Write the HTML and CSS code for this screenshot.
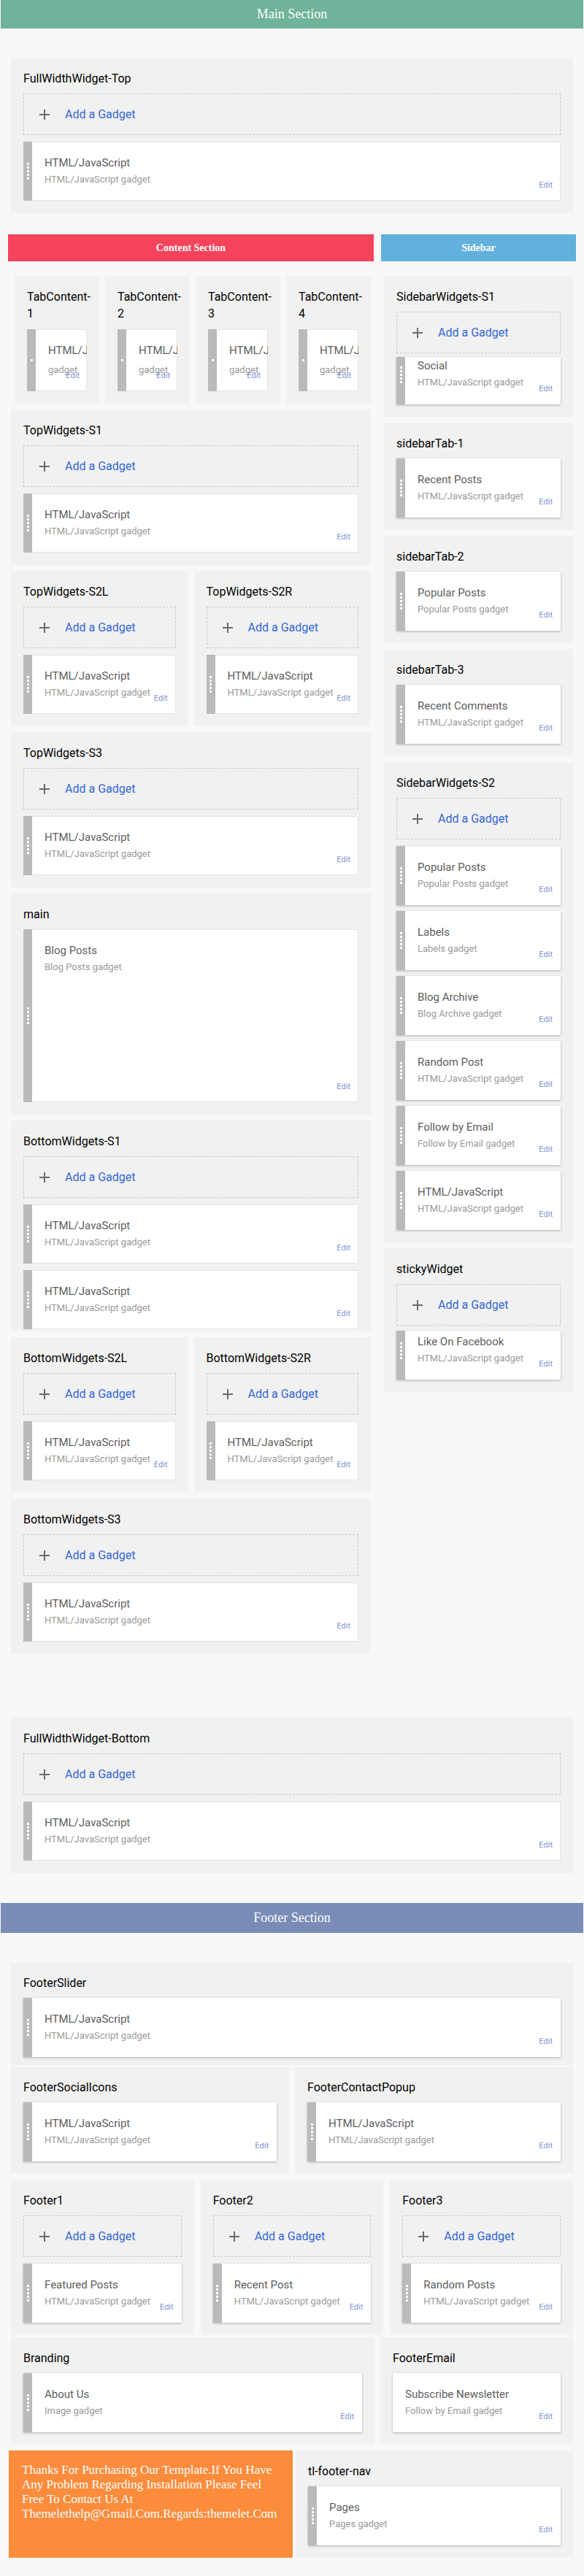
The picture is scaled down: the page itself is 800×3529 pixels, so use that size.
FILE: index.html
```html
<!DOCTYPE html>
<html lang="en">
<head>
<meta charset="utf-8">
<title>Layout</title>
<link rel="stylesheet" href="styles.css">
</head>
<body>
<div class="bar bar-main">Main Section</div>

<div class="panel wide fww-top">
  <h3 class="ptitle">FullWidthWidget-Top</h3>
  <div class="add"><span class="plus"></span>Add a Gadget</div>
  <div class="card"><div class="handle"><i class="dots"></i></div><div class="body"><div class="wt">HTML/JavaScript</div><div class="wd">HTML/JavaScript gadget</div></div><span class="edit">Edit</span></div>
</div>

<div class="cols">
  <div class="col">
    <div class="bar bar-content">Content Section</div>
    <div class="tabs">
      <div class="panel tabp"><h3 class="ptitle">TabContent-1</h3><div class="card tab"><div class="handle"><i class="dot1"></i></div><div class="body"><div class="wt">HTML/JavaScript</div><div class="wd">gadget</div></div><span class="edit">Edit</span></div></div>
      <div class="panel tabp"><h3 class="ptitle">TabContent-2</h3><div class="card tab"><div class="handle"><i class="dot1"></i></div><div class="body"><div class="wt">HTML/JavaScript</div><div class="wd">gadget</div></div><span class="edit">Edit</span></div></div>
      <div class="panel tabp"><h3 class="ptitle">TabContent-3</h3><div class="card tab"><div class="handle"><i class="dot1"></i></div><div class="body"><div class="wt">HTML/JavaScript</div><div class="wd">gadget</div></div><span class="edit">Edit</span></div></div>
      <div class="panel tabp"><h3 class="ptitle">TabContent-4</h3><div class="card tab"><div class="handle"><i class="dot1"></i></div><div class="body"><div class="wt">HTML/JavaScript</div><div class="wd">gadget</div></div><span class="edit">Edit</span></div></div>
    </div>

    <div class="panel">
      <h3 class="ptitle">TopWidgets-S1</h3>
      <div class="add"><span class="plus"></span>Add a Gadget</div>
      <div class="card"><div class="handle"><i class="dots"></i></div><div class="body"><div class="wt">HTML/JavaScript</div><div class="wd">HTML/JavaScript gadget</div></div><span class="edit">Edit</span></div>
    </div>

    <div class="split">
      <div class="panel">
        <h3 class="ptitle">TopWidgets-S2L</h3>
        <div class="add"><span class="plus"></span>Add a Gadget</div>
        <div class="card"><div class="handle"><i class="dots"></i></div><div class="body"><div class="wt">HTML/JavaScript</div><div class="wd">HTML/JavaScript gadget</div></div><span class="edit">Edit</span></div>
      </div>
      <div class="panel">
        <h3 class="ptitle">TopWidgets-S2R</h3>
        <div class="add"><span class="plus"></span>Add a Gadget</div>
        <div class="card"><div class="handle"><i class="dots"></i></div><div class="body"><div class="wt">HTML/JavaScript</div><div class="wd">HTML/JavaScript gadget</div></div><span class="edit">Edit</span></div>
      </div>
    </div>

    <div class="panel">
      <h3 class="ptitle">TopWidgets-S3</h3>
      <div class="add"><span class="plus"></span>Add a Gadget</div>
      <div class="card"><div class="handle"><i class="dots"></i></div><div class="body"><div class="wt">HTML/JavaScript</div><div class="wd">HTML/JavaScript gadget</div></div><span class="edit">Edit</span></div>
    </div>

    <div class="panel">
      <h3 class="ptitle">main</h3>
      <div class="card tall"><div class="handle"><i class="dots"></i></div><div class="body"><div class="wt">Blog Posts</div><div class="wd">Blog Posts gadget</div></div><span class="edit">Edit</span></div>
    </div>

    <div class="panel pb3">
      <h3 class="ptitle">BottomWidgets-S1</h3>
      <div class="add"><span class="plus"></span>Add a Gadget</div>
      <div class="card"><div class="handle"><i class="dots"></i></div><div class="body"><div class="wt">HTML/JavaScript</div><div class="wd">HTML/JavaScript gadget</div></div><span class="edit">Edit</span></div>
      <div class="card"><div class="handle"><i class="dots"></i></div><div class="body"><div class="wt">HTML/JavaScript</div><div class="wd">HTML/JavaScript gadget</div></div><span class="edit">Edit</span></div>
    </div>

    <div class="split">
      <div class="panel">
        <h3 class="ptitle">BottomWidgets-S2L</h3>
        <div class="add"><span class="plus"></span>Add a Gadget</div>
        <div class="card"><div class="handle"><i class="dots"></i></div><div class="body"><div class="wt">HTML/JavaScript</div><div class="wd">HTML/JavaScript gadget</div></div><span class="edit">Edit</span></div>
      </div>
      <div class="panel">
        <h3 class="ptitle">BottomWidgets-S2R</h3>
        <div class="add"><span class="plus"></span>Add a Gadget</div>
        <div class="card"><div class="handle"><i class="dots"></i></div><div class="body"><div class="wt">HTML/JavaScript</div><div class="wd">HTML/JavaScript gadget</div></div><span class="edit">Edit</span></div>
      </div>
    </div>

    <div class="panel">
      <h3 class="ptitle">BottomWidgets-S3</h3>
      <div class="add"><span class="plus"></span>Add a Gadget</div>
      <div class="card"><div class="handle"><i class="dots"></i></div><div class="body"><div class="wt">HTML/JavaScript</div><div class="wd">HTML/JavaScript gadget</div></div><span class="edit">Edit</span></div>
    </div>
  </div>

  <div class="col side">
    <div class="bar bar-sidebar">Sidebar</div>

    <div class="panel">
      <h3 class="ptitle">SidebarWidgets-S1</h3>
      <div class="add m5"><span class="plus"></span>Add a Gadget</div>
      <div class="card sh cut"><div class="handle"><i class="dots"></i></div><div class="body"><div class="wt">Social</div><div class="wd">HTML/JavaScript gadget</div></div><span class="edit">Edit</span></div>
    </div>

    <div class="panel">
      <h3 class="ptitle">sidebarTab-1</h3>
      <div class="card sh"><div class="handle"><i class="dots"></i></div><div class="body"><div class="wt">Recent Posts</div><div class="wd">HTML/JavaScript gadget</div></div><span class="edit">Edit</span></div>
    </div>

    <div class="panel">
      <h3 class="ptitle">sidebarTab-2</h3>
      <div class="card sh"><div class="handle"><i class="dots"></i></div><div class="body"><div class="wt">Popular Posts</div><div class="wd">Popular Posts gadget</div></div><span class="edit">Edit</span></div>
    </div>

    <div class="panel">
      <h3 class="ptitle">sidebarTab-3</h3>
      <div class="card sh"><div class="handle"><i class="dots"></i></div><div class="body"><div class="wt">Recent Comments</div><div class="wd">HTML/JavaScript gadget</div></div><span class="edit">Edit</span></div>
    </div>

    <div class="panel stack8">
      <h3 class="ptitle">SidebarWidgets-S2</h3>
      <div class="add"><span class="plus"></span>Add a Gadget</div>
      <div class="card sh"><div class="handle"><i class="dots"></i></div><div class="body"><div class="wt">Popular Posts</div><div class="wd">Popular Posts gadget</div></div><span class="edit">Edit</span></div>
      <div class="card sh"><div class="handle"><i class="dots"></i></div><div class="body"><div class="wt">Labels</div><div class="wd">Labels gadget</div></div><span class="edit">Edit</span></div>
      <div class="card sh"><div class="handle"><i class="dots"></i></div><div class="body"><div class="wt">Blog Archive</div><div class="wd">Blog Archive gadget</div></div><span class="edit">Edit</span></div>
      <div class="card sh"><div class="handle"><i class="dots"></i></div><div class="body"><div class="wt">Random Post</div><div class="wd">HTML/JavaScript gadget</div></div><span class="edit">Edit</span></div>
      <div class="card sh"><div class="handle"><i class="dots"></i></div><div class="body"><div class="wt">Follow by Email</div><div class="wd">Follow by Email gadget</div></div><span class="edit">Edit</span></div>
      <div class="card sh"><div class="handle"><i class="dots"></i></div><div class="body"><div class="wt">HTML/JavaScript</div><div class="wd">HTML/JavaScript gadget</div></div><span class="edit">Edit</span></div>
    </div>

    <div class="panel">
      <h3 class="ptitle">stickyWidget</h3>
      <div class="add m7"><span class="plus"></span>Add a Gadget</div>
      <div class="card sh cut2"><div class="handle"><i class="dots"></i></div><div class="body"><div class="wt">Like On Facebook</div><div class="wd">HTML/JavaScript gadget</div></div><span class="edit">Edit</span></div>
    </div>
  </div>
</div>

<div class="panel wide fww-bottom">
  <h3 class="ptitle">FullWidthWidget-Bottom</h3>
  <div class="add"><span class="plus"></span>Add a Gadget</div>
  <div class="card"><div class="handle"><i class="dots"></i></div><div class="body"><div class="wt">HTML/JavaScript</div><div class="wd">HTML/JavaScript gadget</div></div><span class="edit">Edit</span></div>
</div>

<div class="bar bar-footer">Footer Section</div>

<div class="footer">
  <div class="panel pb11">
    <h3 class="ptitle">FooterSlider</h3>
    <div class="card sh"><div class="handle"><i class="dots"></i></div><div class="body"><div class="wt">HTML/JavaScript</div><div class="wd">HTML/JavaScript gadget</div></div><span class="edit">Edit</span></div>
  </div>

  <div class="frow two">
    <div class="panel">
      <h3 class="ptitle">FooterSocialIcons</h3>
      <div class="card sh"><div class="handle"><i class="dots"></i></div><div class="body"><div class="wt">HTML/JavaScript</div><div class="wd">HTML/JavaScript gadget</div></div><span class="edit">Edit</span></div>
    </div>
    <div class="panel">
      <h3 class="ptitle">FooterContactPopup</h3>
      <div class="card sh"><div class="handle"><i class="dots"></i></div><div class="body"><div class="wt">HTML/JavaScript</div><div class="wd">HTML/JavaScript gadget</div></div><span class="edit">Edit</span></div>
    </div>
  </div>

  <div class="frow three">
    <div class="panel">
      <h3 class="ptitle">Footer1</h3>
      <div class="add"><span class="plus"></span>Add a Gadget</div>
      <div class="card sh"><div class="handle"><i class="dots"></i></div><div class="body"><div class="wt">Featured Posts</div><div class="wd">HTML/JavaScript gadget</div></div><span class="edit">Edit</span></div>
    </div>
    <div class="panel">
      <h3 class="ptitle">Footer2</h3>
      <div class="add"><span class="plus"></span>Add a Gadget</div>
      <div class="card sh"><div class="handle"><i class="dots"></i></div><div class="body"><div class="wt">Recent Post</div><div class="wd">HTML/JavaScript gadget</div></div><span class="edit">Edit</span></div>
    </div>
    <div class="panel">
      <h3 class="ptitle">Footer3</h3>
      <div class="add"><span class="plus"></span>Add a Gadget</div>
      <div class="card sh"><div class="handle"><i class="dots"></i></div><div class="body"><div class="wt">Random Posts</div><div class="wd">HTML/JavaScript gadget</div></div><span class="edit">Edit</span></div>
    </div>
  </div>

  <div class="frow brand">
    <div class="panel">
      <h3 class="ptitle">Branding</h3>
      <div class="card sh"><div class="handle"><i class="dots"></i></div><div class="body"><div class="wt">About Us</div><div class="wd">Image gadget</div></div><span class="edit">Edit</span></div>
    </div>
    <div class="panel">
      <h3 class="ptitle">FooterEmail</h3>
      <div class="card sh"><div class="body"><div class="wt">Subscribe Newsletter</div><div class="wd">Follow by Email gadget</div></div><span class="edit">Edit</span></div>
    </div>
  </div>

  <div class="frow last">
    <div class="note">Thanks For Purchasing Our Template.If You Have Any Problem Regarding Installation Please Feel Free To Contact Us At Themelethelp@Gmail.Com.Regards:themelet.Com</div>
    <div class="panel">
      <h3 class="ptitle">tl-footer-nav</h3>
      <div class="card sh"><div class="handle"><i class="dots"></i></div><div class="body"><div class="wt">Pages</div><div class="wd">Pages gadget</div></div><span class="edit">Edit</span></div>
    </div>
  </div>
</div>
</body>
</html>
```

FILE: styles.css
```css
* { box-sizing: border-box; }
html, body { margin: 0; padding: 0; }
body {
  background: #f8f8f8;
  font-family: Roboto, "Liberation Sans", Arial, sans-serif;
  color: #000;
  min-height: 3529px;
}

/* section bars */
.bar {
  display: flex;
  align-items: center;
  justify-content: center;
  color: #fff;
  font-family: "Liberation Serif", "Times New Roman", serif;
}
.bar-main { height: 39px; margin: 0 1px 40px; background: #6fb39b; font-size: 18px; }
.bar-footer { height: 41px; margin: 0 1px 40px; background: #798cb7; font-size: 18px; }
.bar-content { height: 37px; background: #f4435a; font-size: 14px; font-weight: 700; margin-bottom: 20px; }
.bar-sidebar { height: 37px; background: #62b1dc; font-size: 14px; font-weight: 700; margin-bottom: 20px; }

/* panels */
.panel { background: #f1f1f1; padding: 17px; }
.wide { margin-left: 15px; margin-right: 15px; }
.fww-top { margin-bottom: 29px; }
.fww-bottom { margin-top: 79px; margin-bottom: 41px; }
.pb3 { padding-bottom: 3px; }
.pb11 { padding-bottom: 11px; }

.ptitle {
  margin: 0 0 8px;
  font-size: 16px;
  font-weight: 400;
  line-height: 24px;
  color: #000;
}

/* columns */
.cols {
  display: grid;
  grid-template-columns: 501px 267px;
  column-gap: 10px;
  margin: 0 11px;
  align-items: start;
}
.col { display: flex; flex-direction: column; }
.col > .panel { margin: 0 4px 8px; }
.tabs {
  display: grid;
  grid-template-columns: repeat(4, 116px);
  gap: 8px;
  margin: 0 4px 8px 9px;
}
.tabp .ptitle { line-height: 23px; margin-bottom: 10px; }
.split {
  display: grid;
  grid-template-columns: 1fr 1fr;
  gap: 8px;
  margin: 0 4px 8px;
}

/* add gadget box */
.add {
  height: 57px;
  border: 1px dashed #c9c9c9;
  display: flex;
  align-items: center;
  padding-left: 21px;
  margin-bottom: 9px;
  font-size: 16px;
  color: #3367d6;
}
.add.m5 { margin-bottom: 5px; }
.add.m7 { margin-bottom: 7px; }
.plus {
  position: relative;
  flex: none;
  width: 14px;
  height: 14px;
  margin-right: 21px;
}
.plus::before, .plus::after {
  content: "";
  position: absolute;
  background: #6b6b6b;
}
.plus::before { left: 6px; top: 0; width: 2px; height: 14px; }
.plus::after { top: 6px; left: 0; width: 14px; height: 2px; }

/* widget cards */
.card {
  position: relative;
  display: flex;
  min-height: 81px;
  background: #fff;
  box-shadow: inset 0 0 0 1px #e4e4e4;
}
.card + .card { margin-top: 9px; }
.stack8 .card + .card { margin-top: 8px; }
.card.sh { box-shadow: 0 1px 3px rgba(0, 0, 0, 0.28); }
.card.tall { min-height: 237px; }
.card.tab { min-height: 85px; }
.card.cut { min-height: 65px; }
.card.cut2 { min-height: 67px; }

.handle {
  flex: none;
  width: 12px;
  background: #bababa;
  display: flex;
  align-items: center;
  justify-content: center;
}
.cut .handle { align-items: flex-start; padding-top: 13px; }
.cut2 .handle { align-items: flex-start; padding-top: 16px; }
.dots {
  display: block;
  width: 3px;
  height: 23px;
  background: repeating-linear-gradient(to bottom, #fff 0 3px, transparent 3px 5px);
}
.dot1 { display: block; width: 3px; height: 3px; background: #fff; }

.body {
  flex: 1;
  min-width: 0;
  overflow: hidden;
  padding: 19px 0 20px 17px;
}
.cut .body { padding-top: 2px; padding-bottom: 0; }
.cut2 .body { padding-top: 5px; padding-bottom: 0; }
.wt {
  font-size: 15px;
  line-height: 20px;
  color: #5e5e5e;
  white-space: nowrap;
}
.wd {
  margin-top: 4px;
  font-size: 13px;
  line-height: 18px;
  color: #9a9a9a;
  white-space: nowrap;
}
.tab .wd { margin-top: 8px; }
.edit {
  position: absolute;
  right: 11px;
  bottom: 15px;
  font-size: 11px;
  line-height: 13px;
  color: #7f92d2;
}
.tab .edit { right: 10px; }

/* footer */
.footer { margin: 0 15px; }
.frow { display: grid; }
.frow.two { grid-template-columns: 1fr 1fr; gap: 8px; margin-top: 2px; }
.frow.three { grid-template-columns: 1fr 1fr 1fr; gap: 9px; margin-top: 8px; }
.frow.brand { grid-template-columns: 498px 1fr; gap: 8px; margin-top: 3px; }
.frow.last { grid-template-columns: 389px 1fr; gap: 4px; margin: 8px 0 0 -3px; }
.note {
  background: #fb8c3c;
  color: #fff;
  font-family: "Liberation Serif", "Times New Roman", serif;
  font-size: 17px;
  line-height: 20px;
  padding: 17px 16px 17px 18px;
}
```
